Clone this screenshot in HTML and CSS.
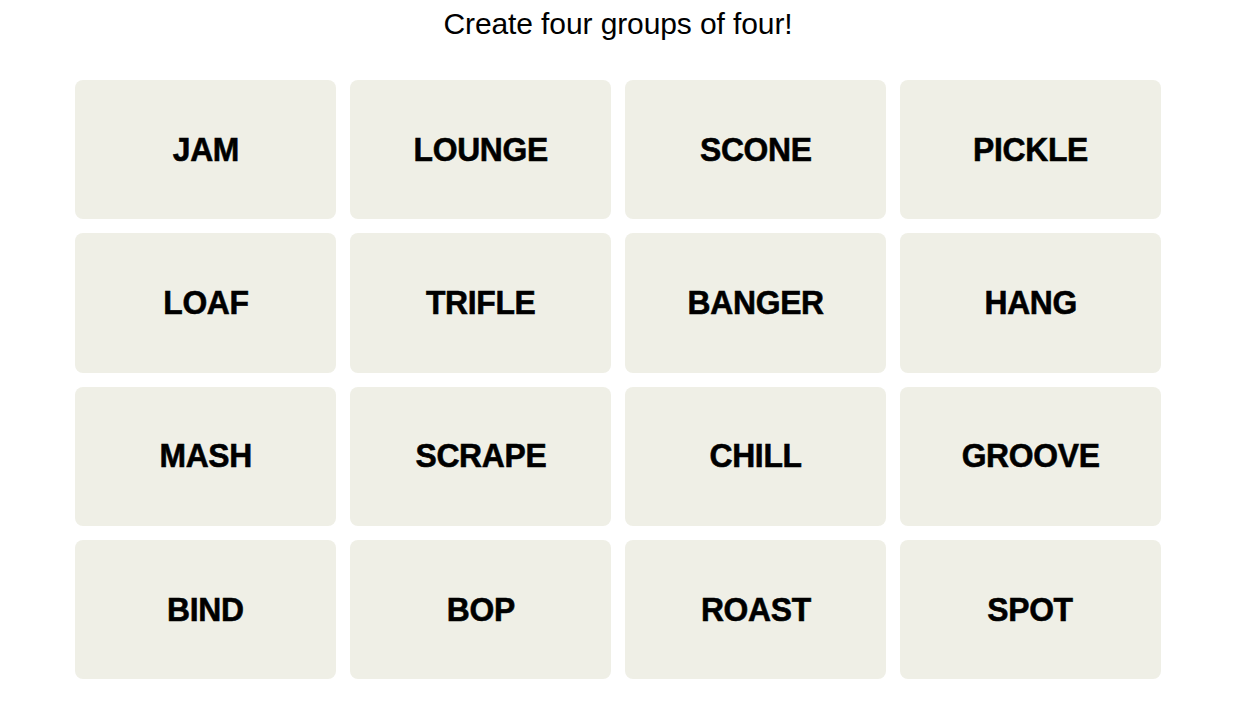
FILE: index.html
```html
<!DOCTYPE html>
<html lang="en">
<head>
<meta charset="utf-8">
<title>Connections</title>
<link rel="stylesheet" href="styles.css">
</head>
<body>
<main class="game">
  <p class="prompt">Create four groups of four!</p>
  <section class="board">
    <button class="tile"><span>JAM</span></button>
    <button class="tile"><span>LOUNGE</span></button>
    <button class="tile"><span>SCONE</span></button>
    <button class="tile"><span>PICKLE</span></button>
    <button class="tile"><span>LOAF</span></button>
    <button class="tile"><span>TRIFLE</span></button>
    <button class="tile"><span>BANGER</span></button>
    <button class="tile"><span>HANG</span></button>
    <button class="tile"><span>MASH</span></button>
    <button class="tile"><span>SCRAPE</span></button>
    <button class="tile"><span>CHILL</span></button>
    <button class="tile"><span>GROOVE</span></button>
    <button class="tile"><span>BIND</span></button>
    <button class="tile"><span>BOP</span></button>
    <button class="tile"><span>ROAST</span></button>
    <button class="tile"><span>SPOT</span></button>
  </section>
</main>
</body>
</html>
```
FILE: styles.css
```css
* { box-sizing: border-box; }
html, body {
  margin: 0;
  padding: 0;
  background: #ffffff;
  color: #000000;
  font-family: "Liberation Sans", Arial, sans-serif;
}
.game {
  width: 1086px;
  margin-left: 75px;
  display: flex;
  flex-direction: column;
  align-items: stretch;
}
.prompt {
  margin: 0;
  height: 80px;
  padding-top: 6px;
  text-align: center;
  font-size: 30px;
  line-height: 36px;
  letter-spacing: -0.1px;
}
.board {
  display: grid;
  grid-template-columns: repeat(4, 261px);
  grid-auto-rows: 139.33px;
  gap: 14px;
}
.tile {
  border: none;
  margin: 0;
  padding: 0;
  border-radius: 8px;
  background: #efefe6;
  color: #000;
  font-family: "Liberation Sans", Arial, sans-serif;
  font-weight: 700;
  font-size: 33.5px;
  display: flex;
  align-items: center;
  justify-content: center;
}
.tile span {
  display: inline-block;
  transform: scaleX(0.95);
  letter-spacing: -0.3px;
  -webkit-text-stroke: 0.6px #000;
}
```
